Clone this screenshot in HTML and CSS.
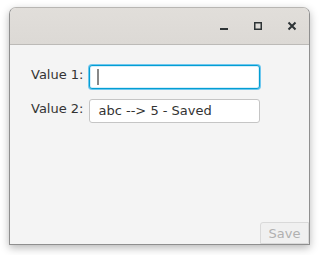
FILE: index.html
```html
<!DOCTYPE html>
<html lang="en">
<head>
    <meta charset="UTF-8">
    <title>Value Form</title>
    <link rel="stylesheet" href="styles.css">
</head>
<body>
    <div class="window">
        <div class="titlebar">
            <button class="title-btn" aria-label="Minimize">
                <svg width="10" height="10" viewBox="0 0 10 10"><rect x="1" y="7" width="8" height="2" fill="#2e3436"/></svg>
            </button>
            <button class="title-btn" aria-label="Maximize">
                <svg width="10" height="10" viewBox="0 0 10 10"><rect x="1.75" y="1.75" width="6.5" height="6.5" fill="none" stroke="#2e3436" stroke-width="1.5"/></svg>
            </button>
            <button class="title-btn" aria-label="Close">
                <svg width="10" height="10" viewBox="0 0 10 10"><path d="M1.5 1.5 L8.5 8.5 M8.5 1.5 L1.5 8.5" stroke="#2e3436" stroke-width="2"/></svg>
            </button>
        </div>
        <div class="content">
            <div class="form">
                <label class="form-label" for="value1">Value 1:</label>
                <div class="field focused"><span class="caret"></span></div>
                <label class="form-label" for="value2">Value 2:</label>
                <div class="field">abc --&gt; 5 - Saved</div>
            </div>
            <div class="actions">
                <button class="save-btn" disabled>Save</button>
            </div>
        </div>
    </div>
</body>
</html>
```

FILE: styles.css
```css
body {
    margin: 0;
    width: 320px;
    height: 255px;
    background-color: #ffffff;
    font-family: "DejaVu Sans", sans-serif;
    overflow: hidden;
}

.window {
    margin: 7px 0 0 9px;
    width: 299px;
    height: 236px;
    border: 1px solid #8f8f8f;
    border-top-color: #b8b6b3;
    border-radius: 7px 7px 0 0;
    background-color: #f4f4f4;
    box-shadow: 0 3px 9px rgba(0, 0, 0, 0.28);
    display: flex;
    flex-direction: column;
    overflow: hidden;
}

.titlebar {
    height: 36px;
    flex: none;
    background: linear-gradient(#e1deda, #dcd9d5);
    border-bottom: 1px solid #bcbab7;
    display: flex;
    justify-content: flex-end;
    align-items: center;
    gap: 14px;
    padding-right: 7px;
}

.title-btn {
    width: 20px;
    height: 20px;
    padding: 0;
    border: none;
    background: transparent;
    display: flex;
    align-items: center;
    justify-content: center;
}

.content {
    flex: 1;
    display: flex;
    flex-direction: column;
    justify-content: space-between;
}

.form {
    display: grid;
    grid-template-columns: max-content 171px;
    column-gap: 6px;
    row-gap: 10px;
    padding: 20px 0 0 21px;
    align-items: start;
}

.form-label {
    font-size: 13px;
    color: #333333;
    line-height: 18px;
    padding-top: 1px;
}

.field {
    height: 24px;
    box-sizing: border-box;
    border: 1px solid #c5c5c5;
    border-radius: 3px;
    background-color: #ffffff;
    font-size: 13px;
    color: #333333;
    line-height: 22px;
    padding-left: 8px;
}

.field.focused {
    border-color: #039ed3;
    box-shadow: 0 0 0 1px #6ec7ee, inset 0 0 0 1px #d6eefa;
    padding-left: 7px;
    display: flex;
    align-items: center;
}

.caret {
    width: 2px;
    height: 16px;
    background-color: #888888;
}

.actions {
    display: flex;
    justify-content: flex-end;
}

.save-btn {
    width: 49px;
    height: 22px;
    border: 1px solid #d9d9d9;
    border-radius: 3px 0 0 0;
    background-color: #f0f0f0;
    font-family: inherit;
    font-size: 13px;
    color: #b0b0b0;
    padding: 0;
}
```
